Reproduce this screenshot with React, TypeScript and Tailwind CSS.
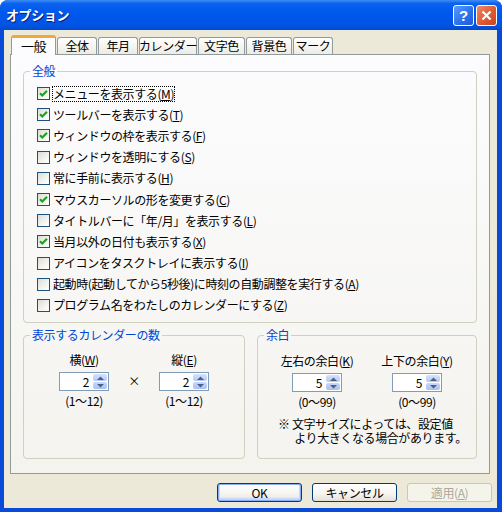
import React from 'react';

const FONT = '"Noto Sans CJK JP", "Noto Sans", sans-serif';

type Item = { label: string; key: string; checked: boolean; focus?: boolean };

const items: Item[] = [
  { label: 'メニューを表示する', key: 'M', checked: true, focus: true },
  { label: 'ツールバーを表示する', key: 'T', checked: true },
  { label: 'ウィンドウの枠を表示する', key: 'F', checked: true },
  { label: 'ウィンドウを透明にする', key: 'S', checked: false },
  { label: '常に手前に表示する', key: 'H', checked: false },
  { label: 'マウスカーソルの形を変更する', key: 'C', checked: true },
  { label: 'タイトルバーに「年/月」を表示する', key: 'L', checked: false },
  { label: '当月以外の日付も表示する', key: 'X', checked: true },
  { label: 'アイコンをタスクトレイに表示する', key: 'I', checked: false },
  { label: '起動時(起動してから5秒後)に時刻の自動調整を実行する', key: 'A', checked: false },
  { label: 'プログラム名をわたしのカレンダーにする', key: 'Z', checked: false },
];

const tabs = [
  { label: '一般', w: 'w-[45px]' },
  { label: '全体', w: 'w-[40px]' },
  { label: '年月', w: 'w-[40px]' },
  { label: 'カレンダー', w: 'w-[58px]' },
  { label: '文字色', w: 'w-[47px]' },
  { label: '背景色', w: 'w-[46px]' },
  { label: 'マーク', w: 'w-[40px]' },
];

function Checkbox({ checked }: { checked: boolean }) {
  return (
    <div className="h-[13px] w-[13px] shrink-0 border border-[#1c5180] bg-[linear-gradient(135deg,#dcdcd7_0%,#f4f4f0_60%,#ffffff_100%)]">
      {checked && (
        <svg width="11" height="11" viewBox="0 0 11 11">
          <path d="M2 5.2 L4.3 7.5 L9 2.8" fill="none" stroke="#21a121" strokeWidth="2.2" />
        </svg>
      )}
    </div>
  );
}

function Mnemonic({ k }: { k: string }) {
  return (
    <>
      (<span className="underline underline-offset-[1px]">{k}</span>)
    </>
  );
}

function SpinBox({ value }: { value: string }) {
  return (
    <div className="flex h-[19px] w-[50px] border border-[#7f9db9] bg-white">
      <div className="flex-1 pr-[3px] text-right leading-[17px]">{value}</div>
      <div className="flex w-[16px] flex-col gap-[1px] p-[1px]">
        <div className="flex flex-1 items-center justify-center rounded-[2px] bg-[linear-gradient(to_bottom,#d6e3fd,#b4c8f6)]">
          <svg width="7" height="4" viewBox="0 0 7 4">
            <path d="M0 4 L3.5 0.5 L7 4 Z" fill="#4d6185" />
          </svg>
        </div>
        <div className="flex flex-1 items-center justify-center rounded-[2px] bg-[linear-gradient(to_bottom,#c8d8fb,#a9c0f3)]">
          <svg width="7" height="4" viewBox="0 0 7 4">
            <path d="M0 0 L3.5 3.5 L7 0 Z" fill="#4d6185" />
          </svg>
        </div>
      </div>
    </div>
  );
}

function Group({ title, className, children }: { title: string; className?: string; children: React.ReactNode }) {
  return (
    <fieldset className={`rounded-[4px] border border-[#d0d0bf] ${className ?? ''}`}>
      <legend className="ml-[6px] px-[2px] text-[12px] leading-[14px] text-[#0046d5]">{title}</legend>
      {children}
    </fieldset>
  );
}

function Button({ children, kind }: { children: React.ReactNode; kind?: 'default' | 'disabled' }) {
  if (kind === 'disabled') {
    return (
      <div className="flex h-[19px] w-[85px] items-center justify-center rounded-[3px] border border-[#c9c7ba] bg-[#f5f4ea] text-[#aca899]">
        {children}
      </div>
    );
  }
  return (
    <div
      className={`flex h-[19px] w-[85px] items-center justify-center rounded-[3px] border border-[#003c74] bg-[linear-gradient(to_bottom,#ffffff_0%,#f5f4ef_60%,#e3e0d6_100%)] ${
        kind === 'default' ? 'shadow-[inset_0_0_0_1px_#8aaef2,inset_0_-1px_0_2px_#c7d8fb]' : ''
      }`}
    >
      {children}
    </div>
  );
}

export default function App() {
  return (
    <div
      className="flex h-[512px] w-[502px] flex-col overflow-hidden rounded-t-[8px] bg-[#0a4ad9] text-[12px] tracking-[-0.4px] text-black"
      style={{ fontFamily: FONT }}
    >
      {/* Title bar */}
      <div className="flex h-[30px] shrink-0 items-center bg-[linear-gradient(to_bottom,#3d8cf5_0%,#0a62ee_12%,#0058ee_40%,#0054e3_85%,#0049cf_100%)] pl-[6px] pr-[5px]">
        <div className="flex-1 text-[13px] font-bold text-white [text-shadow:1px_1px_0_#0a1a80]">オプション</div>
        <div className="flex gap-[2px]">
          <div className="flex h-[21px] w-[21px] items-center justify-center rounded-[3px] border border-white bg-[linear-gradient(135deg,#5a9bff_0%,#2b6fe8_60%,#1d5ad8_100%)] text-[15px] font-bold leading-none text-white" style={{ fontFamily: '"Liberation Sans", sans-serif' }}>
            ?
          </div>
          <div className="flex h-[21px] w-[21px] items-center justify-center rounded-[3px] border border-white bg-[linear-gradient(135deg,#f08a68_0%,#e05a30_55%,#c8441e_100%)]">
            <svg width="11" height="11" viewBox="0 0 11 11">
              <path d="M1.5 1.5 L9.5 9.5 M9.5 1.5 L1.5 9.5" stroke="white" strokeWidth="2.2" />
            </svg>
          </div>
        </div>
      </div>

      {/* Client area */}
      <div className="mb-[4px] ml-[4px] mr-[5px] flex flex-1 flex-col bg-[#ece9d8]">
        {/* Tabs */}
        <div className="ml-[7px] mt-[5px] flex h-[19px] items-end">
          {tabs.map((t, i) =>
            i === 0 ? (
              <div
                key={t.label}
                className={`relative z-10 -mb-[1px] flex h-[20px] ${t.w} items-center justify-center whitespace-nowrap rounded-t-[3px] border-x border-t-[3px] border-x-[#919b9c] border-t-[#f0a83a] bg-[#fcfcfe] pb-[1px] text-[13px]`}
              >
                {t.label}
              </div>
            ) : (
              <div
                key={t.label}
                className={`ml-[1px] flex h-[17px] ${t.w} items-center justify-center whitespace-nowrap rounded-t-[3px] border-x border-t border-[#919b9c] bg-[linear-gradient(to_bottom,#ffffff,#ecebe5)] text-[12px]`}
              >
                {t.label}
              </div>
            ),
          )}
        </div>

        {/* Panel */}
        <div className="ml-[6px] flex h-[420px] w-[480px] flex-col border border-[#919b9c] bg-[linear-gradient(to_bottom,#fcfcfe,#f4f3ee)] px-[12px] pt-[9px]">
          <Group title="全般" className="pb-[6px] pt-[5px]">
            <div className="flex flex-col pl-[13px]">
              {items.map(it => (
                <div key={it.key} className="flex h-[21.2px] items-center gap-[3px]">
                  <Checkbox checked={it.checked} />
                  <span
                    className={`leading-[14px] ${it.focus ? 'outline-1 outline-dotted outline-black' : ''}`}
                  >
                    {it.label}
                    <Mnemonic k={it.key} />
                  </span>
                </div>
              ))}
            </div>
          </Group>

          <div className="mt-[5px] flex gap-[12px]">
            <Group title="表示するカレンダーの数" className="h-[131px] w-[222px]">
              <div className="mt-[11px] flex justify-center">
                <div className="flex w-[70px] flex-col items-center">
                  <div className="leading-[14px]">
                    横<Mnemonic k="W" />
                  </div>
                  <div className="mt-[5px]">
                    <SpinBox value="2" />
                  </div>
                  <div className="mt-[3px] leading-[14px]">(1～12)</div>
                </div>
                <div className="flex w-[30px] justify-center pt-[21px] leading-[14px]">×</div>
                <div className="flex w-[70px] flex-col items-center">
                  <div className="leading-[14px]">
                    縦<Mnemonic k="E" />
                  </div>
                  <div className="mt-[5px]">
                    <SpinBox value="2" />
                  </div>
                  <div className="mt-[3px] leading-[14px]">(1～12)</div>
                </div>
              </div>
            </Group>

            <Group title="余白" className="h-[131px] w-[220px]">
              <div className="mt-[12px] flex justify-center gap-[10px]">
                <div className="flex w-[90px] flex-col items-center">
                  <div className="leading-[14px]">
                    左右の余白<Mnemonic k="K" />
                  </div>
                  <div className="mt-[5px]">
                    <SpinBox value="5" />
                  </div>
                  <div className="mt-[3px] leading-[14px]">(0～99)</div>
                </div>
                <div className="flex w-[90px] flex-col items-center">
                  <div className="leading-[14px]">
                    上下の余白<Mnemonic k="Y" />
                  </div>
                  <div className="mt-[5px]">
                    <SpinBox value="5" />
                  </div>
                  <div className="mt-[3px] leading-[14px]">(0～99)</div>
                </div>
              </div>
              <div className="mt-[8px] whitespace-pre-wrap pl-[20px] leading-[14px]">
                {'※ 文字サイズによっては、設定値\n\u3000  より大きくなる場合があります。'}
              </div>
            </Group>
          </div>
        </div>

        {/* Buttons */}
        <div className="mt-[9px] flex justify-end gap-[10px] pr-[5px]">
          <Button kind="default">OK</Button>
          <Button>キャンセル</Button>
          <Button kind="disabled">
            適用<Mnemonic k="A" />
          </Button>
        </div>
      </div>
    </div>
  );
}
